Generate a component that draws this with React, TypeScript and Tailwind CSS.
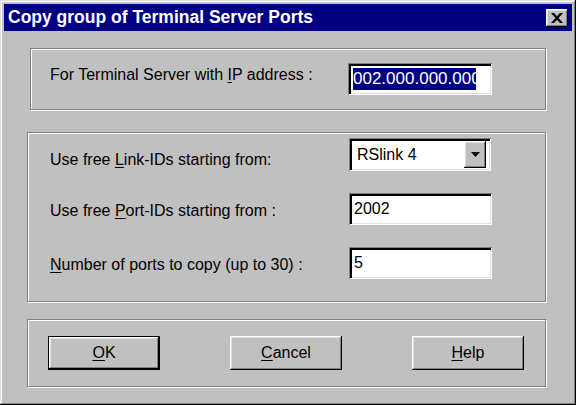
import React from "react";

const raised =
  "shadow-[inset_-1px_-1px_0_#000,inset_1px_1px_0_#fff,inset_-2px_-2px_0_#808080,inset_2px_2px_0_#dfdfdf]";
const sunken =
  "shadow-[inset_1px_1px_0_#808080,inset_-1px_-1px_0_#fff,inset_2px_2px_0_#000,inset_3px_3px_0_#000,inset_-2px_-2px_0_#dfdfdf]";
const etched = "border border-[#808080] shadow-[1px_1px_0_#fff,inset_1px_1px_0_#fff]";

function Key({ children }: { children: React.ReactNode }) {
  return <span className="underline underline-offset-2 decoration-1">{children}</span>;
}

function Field({ value }: { value: string }) {
  return (
    <div className={`flex h-[32px] w-[143px] items-center bg-white pl-[5px] ${sunken}`}>
      <span className="text-[16px] leading-none text-black">{value}</span>
    </div>
  );
}

function Button({ children, primary }: { children: React.ReactNode; primary?: boolean }) {
  return (
    <button
      className={`flex h-[34px] w-[112px] items-center justify-center bg-[#c0c0c0] text-[16px] text-black ${
        primary ? `border border-black ${raised}` : raised
      }`}
    >
      {children}
    </button>
  );
}

export default function App() {
  return (
    <div
      className="flex h-[405px] w-[576px] flex-col bg-[#c0c0c0] p-[4px] shadow-[inset_-1px_-1px_0_#000,inset_1px_1px_0_#dfdfdf,inset_-2px_-2px_0_#808080,inset_2px_2px_0_#fff] select-none"
      style={{ fontFamily: '"Liberation Sans", Arial, sans-serif' }}
    >
      <div className="flex h-[27px] items-center justify-between bg-[#000080] pl-[4px] pr-[4px]">
        <span className="text-[17.5px] font-bold leading-none text-white">Copy group of Terminal Server Ports</span>
        <div className={`flex h-[18px] w-[22px] items-center justify-center bg-[#c0c0c0] ${raised}`}>
          <svg width="12" height="10" viewBox="0 0 12 10">
            <path d="M0 0h3l3 3.3L9 0h3L7.5 5 12 10H9L6 6.7 3 10H0l4.5-5z" fill="#000" />
          </svg>
        </div>
      </div>

      <div className={`ml-[26px] mt-[17px] h-[62px] w-[516px] ${etched}`}>
        <div className="flex h-full items-center pl-[19px]">
          <span className="w-[298px] pb-[8px] text-[16px] leading-none text-black">
            For Terminal Server with <Key>I</Key>P address :
          </span>
          <div className={`flex h-[32px] w-[144px] items-center bg-white pl-[5px] ${sunken}`}>
            <div className="w-[123px] overflow-hidden">
              <span className="block whitespace-nowrap bg-[#000080] text-[17px] leading-[22px] text-white">
                002.000.000.000
              </span>
            </div>
          </div>
        </div>
      </div>

      <div className={`ml-[23px] mt-[22px] h-[170px] w-[519px] ${etched}`}>
        <div className="flex flex-col pl-[22px] pt-[5px]">
          <div className="flex items-end">
            <span className="w-[299px] pb-[3px] text-[16px] leading-none text-black">
              Use free <Key>L</Key>ink-IDs starting from:
            </span>
            <div className={`flex h-[33px] w-[142px] items-center justify-between bg-white pl-[8px] pr-[5px] ${sunken}`}>
              <span className="text-[16px] leading-none text-black">RSlink 4</span>
              <div className={`flex h-[27px] w-[22px] items-center justify-center bg-[#c0c0c0] ${raised}`}>
                <svg width="9" height="5" viewBox="0 0 9 5">
                  <path d="M0 0h9L4.5 5z" fill="#000" />
                </svg>
              </div>
            </div>
          </div>
          <div className="mt-[22px] flex items-end">
            <span className="w-[299px] pb-[6px] text-[16px] leading-none text-black">
              Use free <Key>P</Key>ort-IDs starting from :
            </span>
            <Field value="2002" />
          </div>
          <div className="mt-[22px] flex items-end">
            <span className="w-[299px] pb-[6px] text-[16px] leading-none text-black">
              <Key>N</Key>umber of ports to copy (up to 30) :
            </span>
            <Field value="5" />
          </div>
        </div>
      </div>

      <div className={`ml-[23px] mt-[17px] flex h-[68px] w-[519px] items-center gap-[70px] pl-[20px] ${etched}`}>
        <Button primary>
          <Key>O</Key>K
        </Button>
        <Button>
          <Key>C</Key>ancel
        </Button>
        <Button>
          <Key>H</Key>elp
        </Button>
      </div>
    </div>
  );
}
